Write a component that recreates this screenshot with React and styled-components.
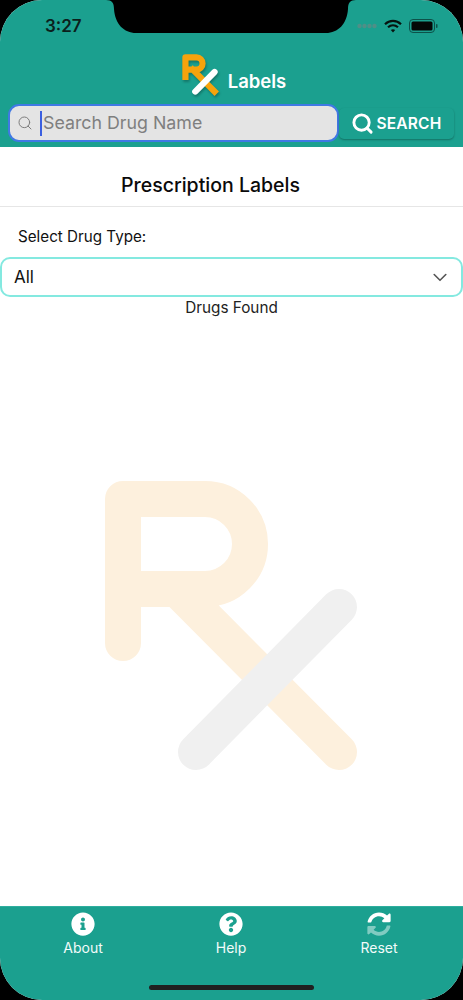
import React from "react";
import styled, { createGlobalStyle } from "styled-components";
import { Search } from "lucide-react";
import { FaInfoCircle, FaQuestionCircle } from "react-icons/fa";

const TEAL = "#1ba08f";
const FONT = 'Inter, "Liberation Sans", sans-serif';

const GlobalStyle = createGlobalStyle`
  html, body {
    margin: 0;
    padding: 0;
    background: #000;
    font-family: ${FONT};
  }
`;

const Screen = styled.div`
  position: relative;
  width: 463px;
  height: 1000px;
  display: flex;
  flex-direction: column;
  overflow: hidden;
  border-radius: 42px;
  background: #fff;
`;

const Notch = styled.svg`
  position: absolute;
  top: 0;
  left: 106px;
`;

const Header = styled.header`
  height: 147px;
  flex: none;
  box-sizing: border-box;
  display: flex;
  flex-direction: column;
  background: ${TEAL};
`;

const StatusBar = styled.div`
  height: 52px;
  flex: none;
  box-sizing: border-box;
  padding: 15px 25px 0 45px;
  display: flex;
  align-items: flex-start;
  justify-content: space-between;
`;

const Time = styled.span`
  font-size: 17px;
  font-weight: 600;
  line-height: 22px;
  color: #0b1f1c;
`;

const StatusIcons = styled.div`
  display: flex;
  align-items: center;
  gap: 7px;
  height: 22px;
`;

const Brand = styled.div`
  height: 52px;
  flex: none;
  display: flex;
  align-items: flex-start;
  justify-content: center;
  gap: 11px;
  padding-left: 6px;
`;

const BrandLogo = styled.div`
  margin-top: 3px;
  height: 39px;
  filter: drop-shadow(1px 2px 1px rgba(0, 0, 0, 0.25));
`;

const BrandName = styled.span`
  margin-top: 17px;
  font-size: 18.5px;
  font-weight: 600;
  line-height: 24px;
  color: #fff;
`;

const SearchRow = styled.div`
  display: flex;
  align-items: center;
  padding-left: 8px;
  height: 38px;
`;

const SearchField = styled.div`
  width: 331px;
  height: 38px;
  box-sizing: border-box;
  display: flex;
  align-items: center;
  padding-left: 7px;
  border: 2px solid #4079e4;
  border-radius: 11px;
  background: #e4e4e4;
  color: #808080;
`;

const Caret = styled.span`
  width: 2px;
  height: 25px;
  margin: 0 1px 0 7px;
  flex: none;
  background: #3b5fe0;
`;

const Placeholder = styled.span`
  font-size: 17.8px;
  line-height: 24px;
  color: #7f7f7f;
`;

const SearchButton = styled.button`
  width: 115px;
  height: 31px;
  padding: 0;
  display: flex;
  align-items: center;
  justify-content: center;
  gap: 2px;
  border: 0;
  border-radius: 5px;
  background: ${TEAL};
  box-shadow: 0 1px 2px rgba(0, 0, 0, 0.3);
  font-family: ${FONT};
  font-size: 15.5px;
  font-weight: 600;
  letter-spacing: 0.2px;
  color: #fff;
`;

const Main = styled.main`
  flex: 1;
  min-height: 0;
  display: flex;
  flex-direction: column;
`;

const Title = styled.h1`
  margin: 0;
  height: 60px;
  box-sizing: border-box;
  padding: 26px 42px 0 0;
  flex: none;
  border-bottom: 1px solid #e6e6e6;
  text-align: center;
  font-size: 19.5px;
  font-weight: 500;
  line-height: 24px;
  color: #0a0a0a;
`;

const FieldLabel = styled.label`
  display: block;
  padding: 20px 0 0 18px;
  height: 50px;
  box-sizing: border-box;
  flex: none;
  font-size: 15.2px;
  line-height: 20px;
  color: #111;
`;

const SelectBox = styled.div`
  height: 40px;
  flex: none;
  box-sizing: border-box;
  display: flex;
  align-items: center;
  justify-content: space-between;
  padding: 0 14px 0 12px;
  border: 2px solid #84e9e0;
  border-radius: 10px;
  font-size: 17px;
  color: #111;
`;

const FoundText = styled.div`
  flex: none;
  height: 21px;
  text-align: center;
  font-size: 15.3px;
  line-height: 22px;
  color: #222;
`;

const Watermark = styled.div`
  flex: 1;
  display: flex;
  justify-content: center;
  padding: 163px 1px 0 0;
`;

const TabBar = styled.nav`
  height: 94px;
  flex: none;
  box-sizing: border-box;
  display: flex;
  justify-content: space-between;
  padding: 5px 54px 0 53px;
  background: ${TEAL};
  border-top: 1px solid #2fae9e;
`;

const Tab = styled.div`
  width: 60px;
  display: flex;
  flex-direction: column;
  align-items: center;
  gap: 2px;
  font-size: 14px;
  line-height: 20px;
  color: #f2fbfa;
`;

const TabIcon = styled.div`
  width: 24px;
  height: 24px;
  font-size: 24px;
  color: #fff;
  svg {
    display: block;
  }
`;

const HomeBar = styled.div`
  position: absolute;
  left: 149px;
  bottom: 10px;
  width: 165px;
  height: 5px;
  border-radius: 3px;
  background: #202020;
`;

const RxMark = ({ width, height, rColor, barColor, weight = 36, cap = "round" }) => (
  <svg
    width={width}
    height={height}
    viewBox="105 481 252 289"
    fill="none"
    strokeWidth={weight}
    strokeLinecap={cap}
    strokeLinejoin="round"
    overflow="visible"
  >
    <path d="M123 643V499H205A45 45 0 0 1 205 589H123M177 589L339 752" stroke={rColor} />
    <path d="M339 607L196 752" stroke={barColor} strokeLinecap="round" />
  </svg>
);

const SignalDots = () => (
  <svg width="20" height="6" viewBox="0 0 20 6" fill="#4f8f87">
    <circle cx="2.5" cy="3" r="2.2" />
    <circle cx="7.5" cy="3" r="2.2" />
    <circle cx="12.5" cy="3" r="2.2" />
    <circle cx="17.5" cy="3" r="2.2" />
  </svg>
);

const WifiIcon = () => (
  <svg width="18" height="14" viewBox="0 0 18 14" fill="none" stroke="#06130f" strokeWidth="2.2">
    <path d="M1 5.2C5.6 0.8 12.4 0.8 17 5.2" />
    <path d="M4 8.3C6.9 5.7 11.1 5.7 14 8.3" />
    <path d="M9 13.5L6.8 11.1C8.1 10.1 9.9 10.1 11.2 11.1Z" fill="#06130f" stroke="none" />
  </svg>
);

const BatteryIcon = () => (
  <svg width="29" height="14" viewBox="0 0 29 14">
    <rect x="0.5" y="0.5" width="25" height="13" rx="3.5" fill="none" stroke="#0d5149" />
    <rect x="2.5" y="2.5" width="21" height="9" rx="1.5" fill="#040807" />
    <rect x="27" y="5" width="1.5" height="4" rx="0.7" fill="#0d5149" />
  </svg>
);

const ResetIcon = () => (
  <svg width="24" height="24" viewBox="0 0 512 512" fill="#fff">
    <path d="M370.72 133.28C339.458 104.008 298.888 87.962 255.848 88c-77.458.068-144.328 53.178-162.791 126.85-1.344 5.363-6.122 9.15-11.651 9.15H24.103c-7.498 0-13.194-6.807-11.807-14.176C33.933 94.924 134.813 8 256 8c66.448 0 126.791 26.136 171.315 68.685L463.03 40.97C478.149 25.851 504 36.559 504 57.941V192c0 13.255-10.745 24-24 24H345.941c-21.382 0-32.09-25.851-16.971-40.971l41.75-41.749z" />
    <path
      opacity="0.45"
      d="M32 296h134.059c21.382 0 32.09 25.851 16.971 40.971l-41.75 41.75c31.262 29.273 71.835 45.319 114.876 45.28 77.418-.07 144.315-53.144 162.787-126.849 1.344-5.363 6.122-9.15 11.651-9.15h57.304c7.498 0 13.194 6.807 11.807 14.176C478.067 417.076 377.187 504 256 504c-66.448 0-126.791-26.136-171.315-68.685L48.97 471.03C33.851 486.149 8 475.441 8 454.059V320c0-13.255 10.745-24 24-24z"
    />
  </svg>
);

const Chevron = () => (
  <svg width="14" height="9" viewBox="0 0 14 9" fill="none" stroke="#555" strokeWidth="1.6" strokeLinecap="round" strokeLinejoin="round">
    <path d="M1.2 1.5L7 7.3L12.8 1.5" />
  </svg>
);

export default function App() {
  return (
    <>
      <GlobalStyle />
      <Screen>
        <Header>
          <StatusBar>
            <Time>3:27</Time>
            <StatusIcons>
              <SignalDots />
              <WifiIcon />
              <BatteryIcon />
            </StatusIcons>
          </StatusBar>
          <Brand>
            <BrandLogo>
              <RxMark width={34} height={39} rColor="#f7a30c" barColor="#fff" weight={46} cap="square" />
            </BrandLogo>
            <BrandName>Labels</BrandName>
          </Brand>
          <SearchRow>
            <SearchField>
              <Search size={16} strokeWidth={1.5} color="#7d7d7d" />
              <Caret />
              <Placeholder>Search Drug Name</Placeholder>
            </SearchField>
            <SearchButton>
              <Search size={23} strokeWidth={3} />
              SEARCH
            </SearchButton>
          </SearchRow>
        </Header>
        <Main>
          <Title>Prescription Labels</Title>
          <FieldLabel>Select Drug Type:</FieldLabel>
          <SelectBox>
            All
            <Chevron />
          </SelectBox>
          <FoundText>Drugs Found</FoundText>
          <Watermark>
            <RxMark width={252} height={289} rColor="#fdf0dd" barColor="#f0f0f0" />
          </Watermark>
        </Main>
        <TabBar>
          <Tab>
            <TabIcon>
              <FaInfoCircle />
            </TabIcon>
            About
          </Tab>
          <Tab>
            <TabIcon>
              <FaQuestionCircle />
            </TabIcon>
            Help
          </Tab>
          <Tab>
            <TabIcon>
              <ResetIcon />
            </TabIcon>
            Reset
          </Tab>
        </TabBar>
        <HomeBar />
        <Notch width="250" height="34" viewBox="0 0 250 34" fill="#000">
          <path d="M0 0H250C244 0 242 3 242 9C241 24 232 33 220 33H30C18 33 9 24 8 9C8 3 6 0 0 0Z" />
        </Notch>
      </Screen>
    </>
  );
}
